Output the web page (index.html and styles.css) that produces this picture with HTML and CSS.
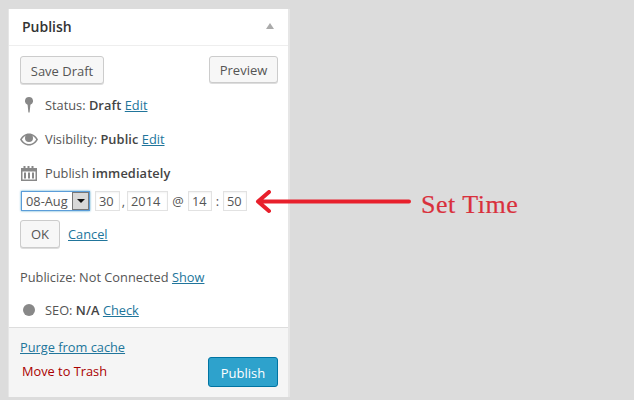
FILE: index.html
```html
<!doctype html>
<html lang="en">
  <head>
    <meta charset="UTF-8" />
    <title>Publish</title>
    <link rel="stylesheet" href="styles.css">
  </head>
  <body>
    <div class="panel">
      <div class="panel-head">
        <h2>Publish</h2>
        <span class="collapse"></span>
      </div>
      <div class="panel-body">
        <div class="actions">
          <button class="btn save">Save Draft</button>
          <button class="btn preview">Preview</button>
        </div>
        <div class="row status">
          <svg class="icon" width="8" height="16" viewBox="0 0 8 16"><path d="M4 0a4 4 0 0 1 1.400 7.750L4.600 15.500H3.400L2.600 7.750A4 4 0 0 1 4 0z" fill="#888"/></svg>
          <span>Status: <b>Draft</b> <a href="#">Edit</a></span>
        </div>
        <div class="row visibility">
          <svg class="icon" width="18" height="13" viewBox="0 0 18 13"><path d="M0 6.500C2 3 5 .500 9 .500s7 2.500 9 6c-2 3.500-5 6-9 6s-7-2.500-9-6zm1.800 0c1.500 2.500 4 4.600 7.200 4.600s5.700-2.100 7.200-4.600c-1.500-2.500-4-4.600-7.200-4.600S3.300 4 1.800 6.500z" fill="#888" fill-rule="evenodd"/><path d="M5 5a4 4 0 0 1 8 0 4 4 0 0 1-8 0z" fill="#888"/></svg>
          <span>Visibility: <b>Public</b> <a href="#">Edit</a></span>
        </div>
        <div class="row schedule">
          <svg class="icon" width="16" height="15" viewBox="0 0 16 15"><path d="M0 2h2.500V0h2v2h2V0h2v2h2V0h2v2H16v13H0zm1.500 3.500v8h13v-8zM3 6.500h2v6H3zm4 0h2v6H7zm4 0h2v6h-2z" fill="#888" fill-rule="evenodd"/></svg>
          <span>Publish <b>immediately</b></span>
        </div>
        <div class="date-row">
          <div class="month">
            <span>08-Aug</span>
            <span class="month-btn"><i></i></span>
          </div>
          <span class="field day">30</span>
          <span class="sep">,</span>
          <span class="field year">2014</span>
          <span class="sep at">@</span>
          <span class="field hour">14</span>
          <span class="sep colon">:</span>
          <span class="field min">50</span>
        </div>
        <div class="ok-row">
          <button class="btn ok">OK</button>
          <a href="#">Cancel</a>
        </div>
        <div class="publicize">Publicize: Not Connected <a href="#">Show</a></div>
        <div class="row seo">
          <span class="dot"></span>
          <span>SEO: <b>N/A</b> <a href="#">Check</a></span>
        </div>
      </div>
      <div class="panel-foot">
        <div class="foot-links">
          <a href="#">Purge from cache</a>
          <a href="#" class="trash">Move to Trash</a>
        </div>
        <button class="btn-primary">Publish</button>
      </div>
    </div>

    <svg class="arrow" width="160" height="24" viewBox="0 0 160 24">
      <path d="M156 11.500H6M16 2L5 11.500L16 21" fill="none" stroke="#e8202c" stroke-width="4" stroke-linecap="round" stroke-linejoin="round"/>
    </svg>
    <div class="label">Set Time</div>
  </body>
</html>
```

FILE: styles.css
```css
* {
  margin: 0;
  padding: 0;
  box-sizing: border-box;
}

body {
  font-family: "Open Sans", sans-serif;
  font-size: 12.8px;
  color: #555;
  background: #dcdcdc;
  height: 400px;
  overflow: hidden;
  position: relative;
  padding: 9px 0 0 9px;
}

a {
  color: #21759b;
  text-decoration: underline;
}

b {
  font-weight: 600;
  color: #444;
  letter-spacing: 0.1px;
}

.panel {
  width: 281px;
  height: 388px;
  background: #fff;
  border-right: 2px solid #e6e6e6;
  box-shadow: -1px 0 0 #e6e6e6;
  display: flex;
  flex-direction: column;
}

.panel-head {
  height: 37px;
  padding: 0 14px 2px 13px;
  border-bottom: 1px solid #eee;
  display: flex;
  align-items: center;
  justify-content: space-between;
}

.panel-head h2 {
  font-size: 14px;
  font-weight: 600;
  color: #333;
}

.collapse {
  width: 0;
  height: 0;
  border-left: 4px solid transparent;
  border-right: 4px solid transparent;
  border-bottom: 6px solid #aaa;
}

.panel-body {
  flex: 1;
  padding: 10px 10px 0 11px;
}

.actions {
  display: flex;
  justify-content: space-between;
  align-items: flex-start;
  height: 28px;
}

.btn {
  font-family: inherit;
  font-size: 13px;
  color: #555;
  background: #f7f7f7;
  border: 1px solid #ccc;
  border-radius: 3px;
  box-shadow: 0 1px 0 #ddd;
  height: 27px;
  padding: 0;
}

.save {
  width: 84px;
  height: 28px;
  padding-top: 2px;
}

.preview {
  width: 69px;
}

.row {
  display: flex;
  align-items: center;
  height: 20px;
}

.icon {
  flex: none;
}

.status {
  margin-top: 11px;
  gap: 12px;
}

.status .icon {
  margin-left: 5px;
}

.visibility {
  margin-top: 14px;
  gap: 7px;
}

.schedule {
  margin-top: 14px;
  gap: 8px;
}

.schedule .icon {
  margin-left: 1px;
}

.date-row {
  display: flex;
  align-items: center;
  height: 20px;
  margin-top: 8px;
  color: #555;
}

.month {
  width: 69px;
  height: 20px;
  margin-left: 1px;
  border: 1px solid #5b9dd9;
  box-shadow: 0 0 2px rgba(30, 140, 190, 0.8);
  display: flex;
  align-items: center;
  justify-content: space-between;
  padding-left: 4px;
  background: #fff;
  flex: none;
}

.month-btn {
  width: 17px;
  height: 18px;
  background: #d8d8d8;
  border: 1px solid #777;
  display: flex;
  align-items: center;
  justify-content: center;
}

.month-btn i {
  width: 0;
  height: 0;
  border-left: 4px solid transparent;
  border-right: 4px solid transparent;
  border-top: 4px solid #111;
}

.field {
  height: 20px;
  border: 1px solid #e2e2e2;
  box-shadow: inset 0 1px 2px rgba(0, 0, 0, 0.05);
  padding-left: 3px;
  line-height: 18px;
  flex: none;
}

.day {
  width: 25px;
  margin-left: 5px;
}

.year {
  width: 41px;
}

.hour {
  width: 24px;
}

.min {
  width: 24px;
}

.sep {
  width: 7px;
  text-align: center;
  flex: none;
}

.at {
  width: 20px;
}

.colon {
  width: 11px;
}

.ok-row {
  display: flex;
  align-items: center;
  gap: 8px;
  margin-top: 9px;
}

.ok {
  width: 40px;
  height: 28px;
}

.publicize {
  margin-top: 19px;
  height: 20px;
  line-height: 20px;
}

.seo {
  margin-top: 13px;
  gap: 10px;
}

.dot {
  width: 12px;
  height: 12px;
  border-radius: 50%;
  background: #888;
  margin-left: 3px;
  flex: none;
}

.panel-foot {
  height: 70px;
  background: #f5f5f5;
  border-top: 1px solid #ddd;
  padding: 0 10px 0 11px;
  display: flex;
  justify-content: space-between;
  align-items: flex-start;
}

.foot-links {
  display: flex;
  flex-direction: column;
  align-items: flex-start;
  padding-top: 10px;
  gap: 6px;
}

.trash {
  color: #a00;
  text-decoration: none;
  margin-left: 2px;
}

.btn-primary {
  font-family: inherit;
  font-size: 13px;
  color: #fff;
  background: #2ea2cc;
  border: 1px solid #0074a2;
  border-radius: 3px;
  width: 70px;
  height: 30px;
  margin-top: 29px;
  padding-top: 2px;
}

/* annotation */
.arrow {
  position: absolute;
  left: 253px;
  top: 190px;
}

.label {
  position: absolute;
  left: 421px;
  top: 190px;
  font-family: "Liberation Serif", serif;
  font-size: 26px;
  letter-spacing: 0.5px;
  -webkit-text-stroke: 0.2px #d9303c;
  color: #d9303c;
}
```
